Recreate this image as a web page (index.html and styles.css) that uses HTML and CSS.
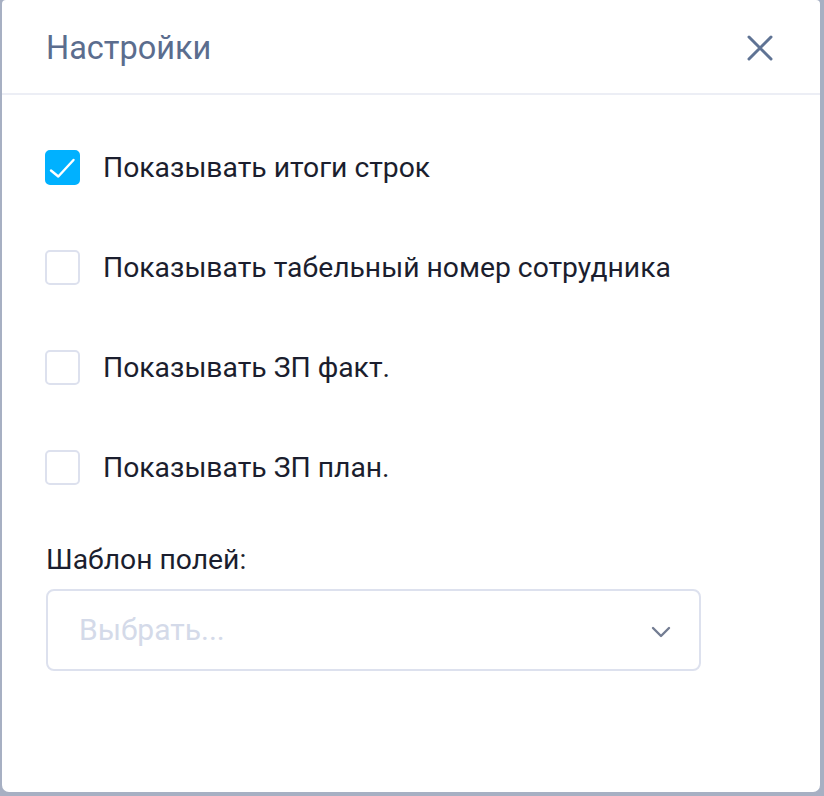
FILE: index.html
```html
<!DOCTYPE html>
<html lang="ru">
<head>
<meta charset="utf-8">
<title>Настройки</title>
<link rel="stylesheet" href="styles.css">
</head>
<body>
<div class="modal">
  <div class="modal-header">
    <h2 class="modal-title">Настройки</h2>
    <button class="close-btn" aria-label="Закрыть">
      <svg width="26" height="26" viewBox="0 0 26 26"><path d="M2 2L24 24M24 2L2 24" stroke="#5f7394" stroke-width="3" stroke-linecap="round" fill="none"/></svg>
    </button>
  </div>
  <div class="modal-body">
    <label class="check-row">
      <span class="box checked">
        <svg width="34" height="34" viewBox="0 0 34 34"><path d="M6 20.5L13.3 26.5L28.5 10" stroke="#fff" stroke-width="2.4" stroke-linecap="round" stroke-linejoin="round" fill="none"/></svg>
      </span>
      <span class="check-text">Показывать итоги строк</span>
    </label>
    <label class="check-row">
      <span class="box"></span>
      <span class="check-text">Показывать табельный номер сотрудника</span>
    </label>
    <label class="check-row">
      <span class="box"></span>
      <span class="check-text">Показывать ЗП факт.</span>
    </label>
    <label class="check-row">
      <span class="box"></span>
      <span class="check-text">Показывать ЗП план.</span>
    </label>
    <div class="field">
      <div class="field-label">Шаблон полей:</div>
      <div class="select">
        <span class="placeholder">Выбрать...</span>
        <svg class="chevron" width="20" height="12" viewBox="0 0 20 12"><path d="M2 2L10 10L18 2" stroke="#737c92" stroke-width="2.4" stroke-linecap="round" stroke-linejoin="round" fill="none"/></svg>
      </div>
    </div>
  </div>
</div>
</body>
</html>
```
FILE: styles.css
```css
html, body {
  margin: 0;
  padding: 0;
}
body {
  background: #a7b0c3;
  font-family: Roboto, "Noto Sans", Arial, sans-serif;
  width: 824px;
  height: 796px;
  overflow: hidden;
  padding-left: 2px;
  box-sizing: border-box;
}
.modal {
  width: 818px;
  height: 792px;
  background: #fff;
  border-radius: 4px 4px 7px 7px;
  box-sizing: border-box;
}
.modal-header {
  height: 95px;
  border-bottom: 2px solid #eceef5;
  box-sizing: border-box;
  display: flex;
  align-items: center;
  justify-content: space-between;
  padding: 0 46px 0 44px;
}
.modal-title {
  margin: 0;
  font-weight: 400;
  font-size: 32.5px;
  color: #5b6d8e;
  padding-top: 2px;
}
.close-btn {
  border: 0;
  background: none;
  padding: 0;
  width: 26px;
  height: 26px;
  display: flex;
  margin-right: 1px;
  margin-top: 2px;
}
.modal-body {
  padding: 55px 44px 0 43px;
  display: flex;
  flex-direction: column;
}
.check-row {
  display: flex;
  align-items: center;
  height: 35px;
  margin-bottom: 65px;
  cursor: pointer;
}
.box {
  width: 35px;
  height: 35px;
  box-sizing: border-box;
  border: 2px solid #dde1ee;
  border-radius: 5px;
  flex: none;
  display: flex;
}
.box.checked {
  background: #00b1ff;
  border-color: #00b1ff;
}
.box.checked svg {
  margin: -2px;
}
.check-text {
  margin-left: 23px;
  font-size: 28.3px;
  color: #1b1e2e;
  line-height: 34px;
}
.field {
  margin-top: -6px;
}
.field-label {
  font-size: 28.3px;
  color: #1b1e2e;
  line-height: 32px;
  padding-left: 1px;
}
.select {
  margin-top: 13px;
  margin-left: 1px;
  width: 655px;
  height: 82px;
  box-sizing: border-box;
  border: 2px solid #dde1ee;
  border-radius: 8px;
  display: flex;
  align-items: center;
  justify-content: space-between;
  padding: 0 28px 0 31px;
}
.placeholder {
  font-size: 30px;
  color: #d4dae9;
  padding-bottom: 2px;
}
.chevron {
  margin-top: 4px;
}
```
